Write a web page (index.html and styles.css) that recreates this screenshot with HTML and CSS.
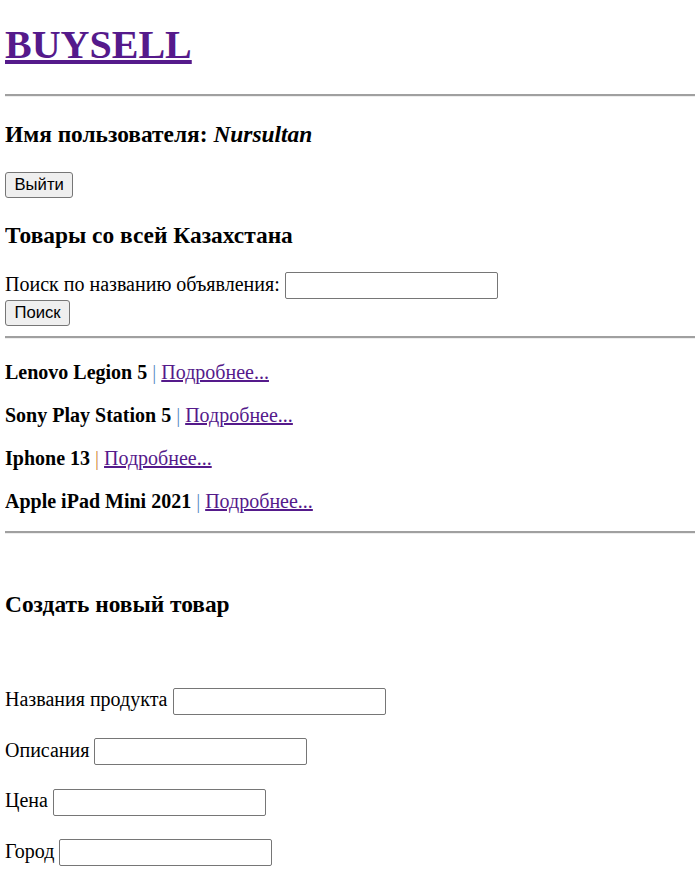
FILE: index.html
```html
<!DOCTYPE html>
<html lang="ru">
<head>
<meta charset="utf-8">
<title>BUYSELL</title>
<link rel="stylesheet" href="styles.css">
</head>
<body>
<h1 class="logo"><a href="#">BUYSELL</a></h1>
<hr class="rule">
<h3 class="user">Имя пользователя: <i>Nursultan</i></h3>
<form class="logout"><button type="button" class="btn">Выйти</button></form>
<h3 class="section-title">Товары со всей Казахстана</h3>
<form class="search">
  <div class="search-row">Поиск по названию объявления: <input type="text" class="field-input"></div>
  <button type="button" class="btn">Поиск</button>
</form>
<hr class="rule rule-list">
<div class="items">
  <p class="item"><b>Lenovo Legion 5</b> <span class="sep">|</span> <a href="#">Подробнее...</a></p>
  <p class="item"><b>Sony Play Station 5</b> <span class="sep">|</span> <a href="#">Подробнее...</a></p>
  <p class="item"><b>Iphone 13</b> <span class="sep sep-warm">|</span> <a href="#">Подробнее...</a></p>
  <p class="item"><b>Apple iPad Mini 2021</b> <span class="sep">|</span> <a href="#">Подробнее...</a></p>
</div>
<hr class="rule">
<h3 class="create-title">Создать новый товар</h3>
<form class="create">
  <div class="field">Названия продукта <input type="text" class="field-input"></div>
  <div class="field">Описания <input type="text" class="field-input"></div>
  <div class="field">Цена <input type="text" class="field-input"></div>
  <div class="field">Город <input type="text" class="field-input"></div>
</form>
</body>
</html>
```
FILE: styles.css
```css
html, body {
  background: #fff;
}
body {
  margin: 0 0 0 5px;
  font-family: "Liberation Serif", "Times New Roman", serif;
  font-size: 20px;
  color: #000;
}
a {
  color: #551a8b;
}
.logo {
  font-size: 40px;
  font-weight: bold;
  margin: 20.5px 0 26.8px;
}
.rule {
  margin: 10px 0;
  border: 0;
  border-top: 2px solid #a0a0a0;
  border-bottom: 1px solid #eeeeee;
  height: 0;
}
.rule-list {
  margin-top: 10px;
  margin-bottom: 22px;
}
h3 {
  font-size: 23.4px;
  font-weight: bold;
  margin: 23.4px 0;
}
.user i {
  font-style: italic;
}
.logout {
  margin: 0;
}
.btn {
  display: block;
  font-family: "Liberation Sans", Arial, sans-serif;
  font-size: 16.67px;
  line-height: 20px;
  padding: 2px 8.5px;
  margin: 0;
  color: #000;
  background: #efefef;
  border: 1px solid #767676;
  border-radius: 3px;
}
.logout .btn {
  margin-top: 24px;
}
.section-title {
  margin-top: 24px;
}
.search {
  margin: 0;
}
.search-row {
  line-height: 23px;
}
.field-input {
  font-family: "Liberation Sans", Arial, sans-serif;
  font-size: 16.67px;
  width: 213px;
  height: 27px;
  box-sizing: border-box;
  padding: 1px 2.5px;
  margin: 0;
  border: 1px solid #767676;
  border-radius: 2px;
  background: #fff;
  vertical-align: baseline;
}
.search .btn {
  margin-top: 1px;
}
.item {
  margin: 20px 0;
  line-height: 23px;
}
.items .item:last-child {
  margin-bottom: 18px;
}
.sep {
  color: #5d8ac4;
}
.sep-warm {
  color: #cf8d45;
}
.create-title {
  margin-top: 57px;
}
.create {
  margin: 0;
  padding-top: 43px;
  display: flex;
  flex-direction: column;
  gap: 20px;
}
.field {
  line-height: 30px;
}
```
